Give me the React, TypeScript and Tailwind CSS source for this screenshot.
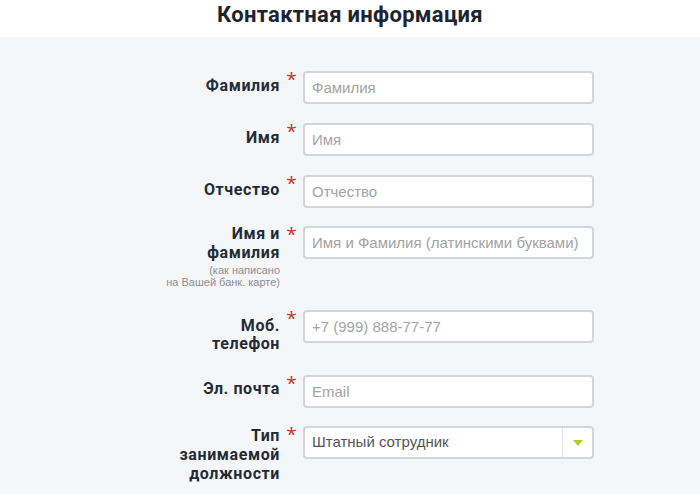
import { ReactNode } from 'react'

interface RowProps {
  label: ReactNode
  labelClass: string
  children: ReactNode
}

const arial = { fontFamily: '"Liberation Sans", Arial, sans-serif' }
const roboto = { fontFamily: 'Roboto, "Open Sans", sans-serif' }

function Row({ label, labelClass, children }: RowProps) {
  return (
    <div className="flex items-start">
      <div
        className={`w-[130px] shrink-0 text-right font-bold text-[16px] tracking-[0.6px] leading-[18.8px] text-[#232b36] ${labelClass}`}
        style={roboto}
      >
        {label}
      </div>
      <div className="w-[23px] shrink-0 text-center text-[19px] leading-none text-[#b8392e] -mt-[1px]">*</div>
      <div className="w-[291px] shrink-0">{children}</div>
    </div>
  )
}

function TextInput({ placeholder }: { placeholder: string }) {
  return (
    <input
      type="text"
      placeholder={placeholder}
      className="block w-full h-[33px] rounded-[4px] border-2 border-[#d4d5d8] bg-white px-[7px] text-[15px] text-[#555] placeholder:text-[#a3a3a3] outline-none"
      style={arial}
    />
  )
}

export default function App() {
  return (
    <div className="min-h-[494px] bg-[#f5f6f8]" style={{ fontFamily: '"Open Sans", "Noto Sans", sans-serif' }}>
      <div className="h-[37px] bg-white flex justify-center">
        <h1 className="text-[22px] leading-[30px] font-bold tracking-[0.3px] text-[#1b2430]" style={roboto}>
          Контактная информация
        </h1>
      </div>

      <div className="ml-[150px] pt-[34px] flex flex-col">
        <Row label="Фамилия" labelClass="pt-[6px]">
          <TextInput placeholder="Фамилия" />
        </Row>
        <div className="h-[19px]" />
        <Row label="Имя" labelClass="pt-[6px]">
          <TextInput placeholder="Имя" />
        </Row>
        <div className="h-[19px]" />
        <Row label="Отчество" labelClass="pt-[6px]">
          <TextInput placeholder="Отчество" />
        </Row>
        <div className="h-[18px]" />
        <Row
          label={
            <>
              <div>
                Имя и<br />
                фамилия
              </div>
              <div className="font-normal tracking-normal text-[11px] leading-[12px] text-[#8a8d91] mt-[1px]" style={arial}>
                (как написано
                <br />
                на Вашей банк. карте)
              </div>
            </>
          }
          labelClass="-mt-[1px]"
        >
          <TextInput placeholder="Имя и Фамилия (латинскими буквами)" />
        </Row>
        <div className="h-[22px]" />
        <Row
          label={
            <>
              Моб.
              <br />
              телефон
            </>
          }
          labelClass="pt-[7px]"
        >
          <TextInput placeholder="+7 (999) 888-77-77" />
        </Row>
        <div className="h-[21px]" />
        <Row label="Эл. почта" labelClass="pt-[5px]">
          <TextInput placeholder="Email" />
        </Row>
        <div className="h-[18px]" />
        <Row
          label={
            <>
              Тип
              <br />
              занимаемой
              <br />
              должности
            </>
          }
          labelClass="pt-[1px]"
        >
          <div className="flex h-[33px] rounded-[4px] border-2 border-[#d4d5d8] bg-white text-[15px] text-[#555]" style={arial}>
            <div className="flex-1 flex items-center px-[7px]">Штатный сотрудник</div>
            <div className="w-[30px] border-l border-[#e3e4e6] flex items-center justify-center">
              <svg width="10" height="6" viewBox="0 0 10 6">
                <path d="M0 0 H10 L5 6 Z" fill="#b2cc1f" />
              </svg>
            </div>
          </div>
        </Row>
      </div>
    </div>
  )
}
